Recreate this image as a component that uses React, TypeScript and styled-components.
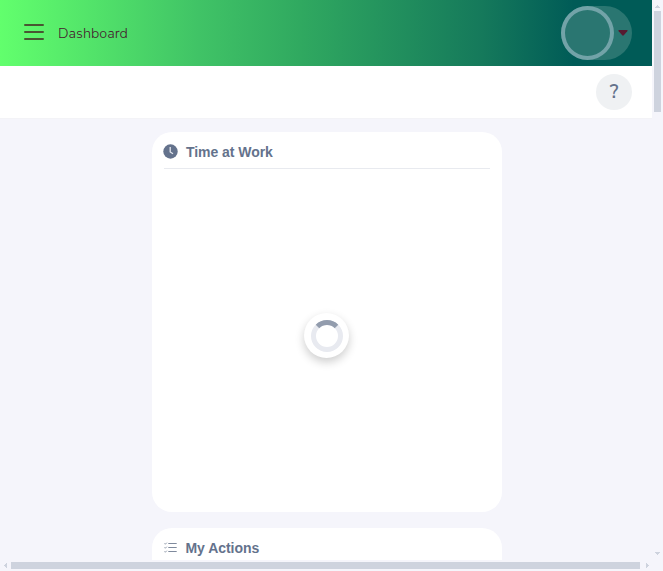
import React from "react";
import styled, { createGlobalStyle } from "styled-components";

const Global = createGlobalStyle`
  * { box-sizing: border-box; }
  body { margin: 0; overflow: hidden; background: #f5f5fb; font-family: "Liberation Sans", Arial, sans-serif; }
  svg { display: block; flex: none; }
`;

const Shell = styled.div`
  display: grid;
  grid-template-columns: 652px 11px;
  grid-template-rows: 560px 11px;
  width: 663px;
  height: 571px;
  overflow: hidden;
`;

const Page = styled.div`
  display: flex;
  flex-direction: column;
  overflow: hidden;
`;

const Header = styled.header`
  flex: none;
  display: flex;
  align-items: center;
  height: 66px;
  padding: 0 20px 0 24px;
  background: linear-gradient(90deg, #62ff6d 0%, #40c366 30.5%, #30a960 46%, #15795b 74%, #005b57 88%);
`;

const MenuButton = styled.button`
  width: 20px;
  height: 20px;
  margin: -2px 14px 0 0;
  padding: 0;
  border: 0;
  background: none;
`;

const Title = styled.h1`
  margin: -1px 0 0;
  font: 300 14.4px/20px "Nunito Sans", Nunito, "Noto Sans", sans-serif;
  color: #45172d;
`;

const UserMenu = styled.div`
  display: flex;
  align-items: center;
  width: 71px;
  height: 54px;
  margin-left: auto;
  border-radius: 27px;
  background: #2a7671;
`;

const Avatar = styled.div`
  width: 53px;
  height: 54px;
  margin-right: 4px;
  border: 4px solid #72a3a8;
  border-radius: 50%;
`;

const SubBar = styled.div`
  flex: none;
  display: flex;
  align-items: center;
  justify-content: flex-end;
  height: 52px;
  padding-right: 20px;
  background: #fff;
`;

const HelpButton = styled.button`
  display: flex;
  align-items: center;
  justify-content: center;
  width: 36px;
  height: 36px;
  padding: 0 0 1px;
  border: 0;
  border-radius: 50%;
  background: #eff1f3;
  color: #64728c;
  font: 600 19.2px/20px "Nunito Sans", Nunito, "Noto Sans", sans-serif;
`;

const Content = styled.main`
  flex: 1;
  display: flex;
  flex-direction: column;
  align-items: center;
  gap: 16px;
  padding: 13px 0 0 2px;
  overflow: hidden;
  border-top: 1px solid #f3f3f7;
`;

const Card = styled.section`
  flex: none;
  display: flex;
  flex-direction: column;
  width: 350px;
  height: 380px;
  padding: 0 12px;
  border-radius: 20px;
  background: #fff;
`;

const CardHead = styled.div`
  flex: none;
  display: flex;
  align-items: center;
  height: 37px;
  padding-top: 3px;
  border-bottom: 1px solid #e8eaef;
`;

const CardTitle = styled.h2<{ $gap: number }>`
  margin: 0 0 0 ${(p) => p.$gap}px;
  font: 700 14px/16px "Liberation Sans", Arial, sans-serif;
  letter-spacing: -0.05px;
  color: #64728c;
`;

const ClockIcon = styled.svg`
  margin-left: -1px;
`;

const CardBody = styled.div`
  flex: 1;
  display: flex;
  align-items: center;
  justify-content: center;
  padding: 0 1px 10px 0;
`;

const Loader = styled.div`
  display: flex;
  align-items: center;
  justify-content: center;
  width: 45px;
  height: 45px;
  border-radius: 50%;
  background: #fff;
  box-shadow: 0 4px 10px rgba(0, 0, 0, 0.2);
`;

const ScrollTrack = styled.div<{ $vertical?: boolean }>`
  display: flex;
  flex-direction: ${(p) => (p.$vertical ? "column" : "row")};
  align-items: center;
  justify-content: space-between;
  background: #f5f5fb;
`;

const ScrollThumb = styled.div<{ $vertical?: boolean; $size: number }>`
  width: ${(p) => (p.$vertical ? 7 : p.$size)}px;
  height: ${(p) => (p.$vertical ? p.$size : 7)}px;
  margin-${(p) => (p.$vertical ? "bottom" : "right")}: auto;
  background: #ced3de;
`;

const Arrow = ({ d }: { d: string }) => (
  <svg width="11" height="11" viewBox="0 0 11 11" shapeRendering="crispEdges">
    <path d={d} fill="#ced3de" />
  </svg>
);

export default function App() {
  return (
    <>
      <Global />
      <Shell>
        <Page>
          <Header>
            <MenuButton aria-label="Menu">
              <svg width="20" height="20" viewBox="0 0 20 20">
                <path d="M1 3H19M1 10H19M1 17H19" stroke="#485632" strokeWidth="2" strokeLinecap="round" />
              </svg>
            </MenuButton>
            <Title>Dashboard</Title>
            <UserMenu>
              <Avatar />
              <svg width="10" height="6" viewBox="0 0 10 6">
                <path d="M.8 0H9.2Q10 .3 9.3 1.2L5.8 5.3Q5 6 4.2 5.3L.7 1.2Q0 .3 .8 0Z" fill="#571b30" />
              </svg>
            </UserMenu>
          </Header>
          <SubBar>
            <HelpButton aria-label="Help">?</HelpButton>
          </SubBar>
          <Content>
            <Card>
              <CardHead>
                <ClockIcon width="15" height="15" viewBox="0 0 15 15">
                  <circle cx="7.5" cy="7.5" r="7.2" fill="#64728c" />
                  <path d="M7.2 3V8L10 9.8" fill="none" stroke="#e4e7ee" strokeWidth="1.3" />
                </ClockIcon>
                <CardTitle $gap={8}>Time at Work</CardTitle>
              </CardHead>
              <CardBody>
                <Loader>
                  <svg width="32" height="32" viewBox="0 0 32 32" fill="none" strokeWidth="5">
                    <circle cx="16" cy="16" r="13.5" stroke="#e8eaf0" />
                    <path d="M6.5 6.5A13.5 13.5 0 0 1 25.5 6.5" stroke="#929cad" />
                  </svg>
                </Loader>
              </CardBody>
            </Card>
            <Card>
              <CardHead>
                <svg width="13" height="11" viewBox="0 0 13 11" fill="none" stroke="#7f8a9d">
                  <path d="M4.3 1.5H12.7M4.3 5.5H12.7M4.3 9.5H12.7" />
                  <path d="M.5 1.5L1.3 2.2L2.8 .7M.5 5.5L1.3 6.2L2.8 4.7M.5 9.5L1.3 10.2L2.8 8.7" strokeWidth=".9" />
                </svg>
                <CardTitle $gap={8.5}>My Actions</CardTitle>
              </CardHead>
            </Card>
          </Content>
        </Page>
        <ScrollTrack $vertical>
          <Arrow d="M5 5H6V6H7V7H8V8H3V7H4V6H5Z" />
          <ScrollThumb $vertical $size={101} />
          <Arrow d="M3 3H8V4H7V5H6V6H5V5H4V4H3Z" />
        </ScrollTrack>
        <ScrollTrack>
          <Arrow d="M4 5H5V4H6V3H7V8H6V7H5V6H4Z" />
          <ScrollThumb $size={629} />
          <Arrow d="M5 3H6V4H7V5H8V6H7V7H6V8H5Z" />
        </ScrollTrack>
      </Shell>
    </>
  );
}
